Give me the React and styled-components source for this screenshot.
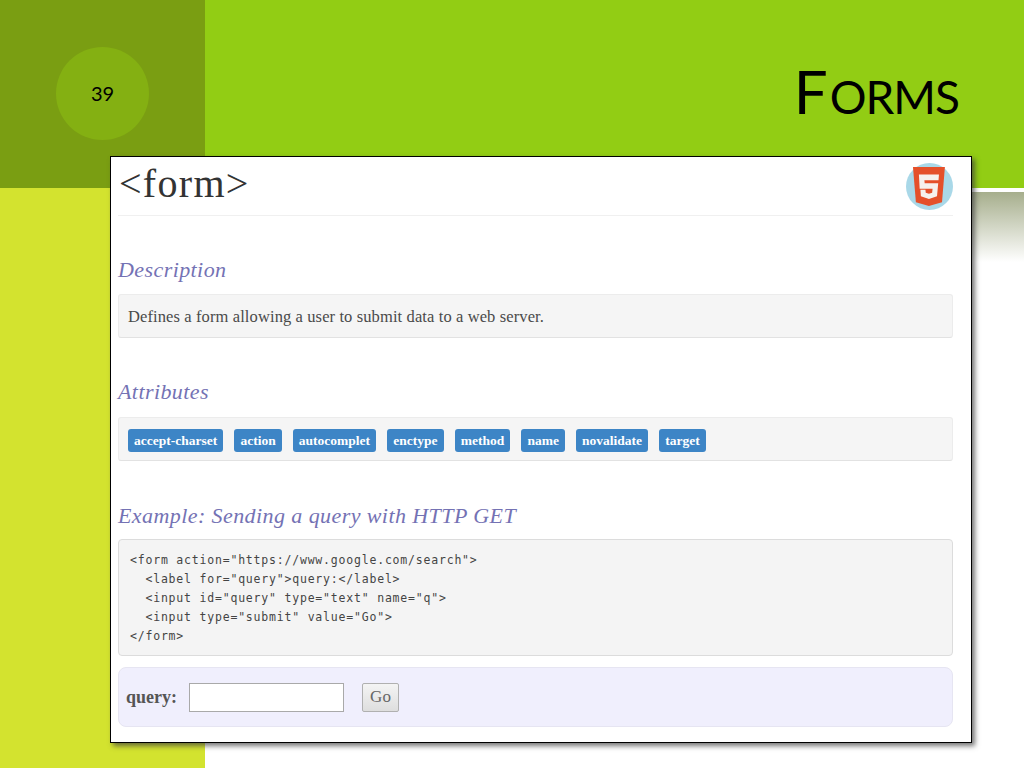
import React from 'react';
import styled, { createGlobalStyle } from 'styled-components';

const GlobalStyle = createGlobalStyle`
  html, body {
    margin: 0;
    padding: 0;
    background: #fff;
  }
`;

const Slide = styled.div`
  position: relative;
  width: 1024px;
  height: 768px;
  overflow: hidden;
  display: grid;
  grid-template-columns: 205px 1fr;
  grid-template-rows: 188px 1fr;
  background: #fff;
`;

const NumberPanel = styled.div`
  background: #7a9e12;
  box-sizing: border-box;
  padding-bottom: 2px;
  display: flex;
  align-items: center;
  justify-content: center;
`;

const NumberCircle = styled.div`
  width: 93px;
  height: 93px;
  border-radius: 50%;
  background: #84b012;
  color: #000;
  font: 20px Lato, sans-serif;
  display: flex;
  align-items: center;
  justify-content: center;
`;

const TitleBar = styled.div`
  background: #92cd14;
  display: flex;
  justify-content: flex-end;
  align-items: flex-start;
  padding: 55px 65px 0 0;
  box-sizing: border-box;
`;

const Title = styled.h1`
  margin: 0;
  font-family: Lato, sans-serif;
  font-weight: 400;
  line-height: 72px;
  color: #000;
`;

const BigCap = styled.span`
  font-size: 60px;
  margin-right: 2px;
`;

const SmallCaps = styled.span`
  font-size: 46px;
  letter-spacing: -1px;
`;

const SideStrip = styled.div`
  background: #d3e32f;
`;

const Fade = styled.div`
  margin-top: 4px;
  height: 70px;
  background: linear-gradient(to bottom, #a6ae8c, #ffffff);
`;

const Card = styled.main`
  position: absolute;
  left: 110px;
  top: 156px;
  width: 862px;
  height: 587px;
  box-sizing: border-box;
  background: #fff;
  border: 1px solid #000;
  box-shadow: 3px 3px 5px rgba(60, 60, 60, 0.7);
  padding: 0 18px 0 7px;
  font-family: "Liberation Serif", serif;
  color: #4a4a4a;
`;

const CardHeader = styled.header`
  height: 58px;
  border-bottom: 1px solid #f0f0f0;
  display: flex;
  justify-content: space-between;
  align-items: flex-start;
`;

const TagName = styled.div`
  font-size: 40px;
  line-height: 54px;
  margin-left: 1px;
  letter-spacing: 1.3px;
  color: #333;
`;

const Badge = styled.svg`
  width: 47px;
  height: 47px;
  margin-top: 6px;
`;

const SectionTitle = styled.h2`
  margin: ${p => p.$top}px 0 0;
  height: 24px;
  font-size: 22px;
  line-height: 24px;
  font-weight: 400;
  font-style: italic;
  color: #7472b4;
  letter-spacing: 0.42px;
`;

const Well = styled.div`
  margin-top: ${p => p.$top}px;
  height: 44px;
  box-sizing: border-box;
  background: #f5f5f5;
  border: 1px solid #ececec;
  border-bottom-color: #e2e2e2;
  border-radius: 3px;
  display: flex;
  align-items: center;
  padding: 2px 0 0 9px;
  font-size: 16.5px;
  letter-spacing: 0.11px;
`;

const Tags = styled(Well)`
  gap: 11.2px;
`;

const Tag = styled.span`
  height: 23px;
  box-sizing: border-box;
  padding: 0 6px;
  background: #3d85c6;
  color: #fff;
  border-radius: 3px;
  font-size: 13.5px;
  font-weight: 700;
  line-height: 23px;
  letter-spacing: 0;
`;

const Code = styled.pre`
  margin: 11px 0 0;
  height: 117px;
  box-sizing: border-box;
  background: #f4f4f4;
  border: 1px solid #dcdcdc;
  border-radius: 4px;
  padding: 11px 11px 0;
  font-family: "DejaVu Sans Mono", monospace;
  font-size: 11.5px;
  letter-spacing: 0.8px;
  line-height: 19px;
  color: #444;
`;

const Demo = styled.form`
  margin-top: 11px;
  height: 60px;
  box-sizing: border-box;
  background: #f0effd;
  border: 1px solid #e6e5f2;
  border-radius: 8px;
  display: flex;
  align-items: center;
  padding-left: 7px;
`;

const QueryLabel = styled.label`
  width: 63px;
  font-size: 18px;
  font-weight: 700;
  color: #555;
`;

const QueryInput = styled.input`
  width: 155px;
  height: 29px;
  box-sizing: border-box;
  background: #fff;
  border: 1px solid #a9a9a9;
  margin: 0 18px 0 0;
  padding: 0;
`;

const GoButton = styled.button`
  width: 37px;
  height: 29px;
  box-sizing: border-box;
  padding: 0;
  background: linear-gradient(to bottom, #f4f4f4, #dedede);
  border: 1px solid #b0b0b0;
  border-radius: 2px;
  font-family: "Liberation Serif", serif;
  font-size: 17px;
  color: #666;
`;

const attributes = ['accept-charset', 'action', 'autocomplet', 'enctype', 'method', 'name', 'novalidate', 'target'];

const sample = `<form action="https://www.google.com/search">
  <label for="query">query:</label>
  <input id="query" type="text" name="q">
  <input type="submit" value="Go">
</form>`;

const Html5Badge = () => (
  <Badge viewBox="0 0 47 47">
    <circle cx="23.5" cy="23.5" r="23.5" fill="#a9d8e8" />
    <g transform="translate(4.7 4) scale(1.52 1.63)">
      <path fill="#e5502a" d="M1.5 0h21l-1.91 21.563L11.977 24l-8.564-2.438L1.5 0z" />
      <polygon
        fill="#f6f1ed"
        points="5.4,4.6 18.6,4.6 18.3,8.2 9,8.2 9.2,10 18.1,10 17.3,18 12,19.6 6.7,18 6.4,14 9.7,14 9.9,15.8 12,16.4 14.1,15.8 14.4,13.3 5.9,13.3"
      />
    </g>
  </Badge>
);

const App = () => (
  <Slide>
    <GlobalStyle />
    <NumberPanel>
      <NumberCircle>39</NumberCircle>
    </NumberPanel>
    <TitleBar>
      <Title>
        <BigCap>F</BigCap>
        <SmallCaps>ORMS</SmallCaps>
      </Title>
    </TitleBar>
    <SideStrip />
    <Fade />
    <Card>
      <CardHeader>
        <TagName>&lt;form&gt;</TagName>
        <Html5Badge />
      </CardHeader>
      <SectionTitle $top={42}>Description</SectionTitle>
      <Well $top={12}>Defines a form allowing a user to submit data to a web server.</Well>
      <SectionTitle $top={42}>Attributes</SectionTitle>
      <Tags $top={13}>
        {attributes.map(name => (
          <Tag key={name}>{name}</Tag>
        ))}
      </Tags>
      <SectionTitle $top={43}>Example: Sending a query with HTTP GET</SectionTitle>
      <Code>{sample}</Code>
      <Demo onSubmit={e => e.preventDefault()}>
        <QueryLabel htmlFor="query">query:</QueryLabel>
        <QueryInput id="query" type="text" name="q" />
        <GoButton type="submit">Go</GoButton>
      </Demo>
    </Card>
  </Slide>
);

export default App;
